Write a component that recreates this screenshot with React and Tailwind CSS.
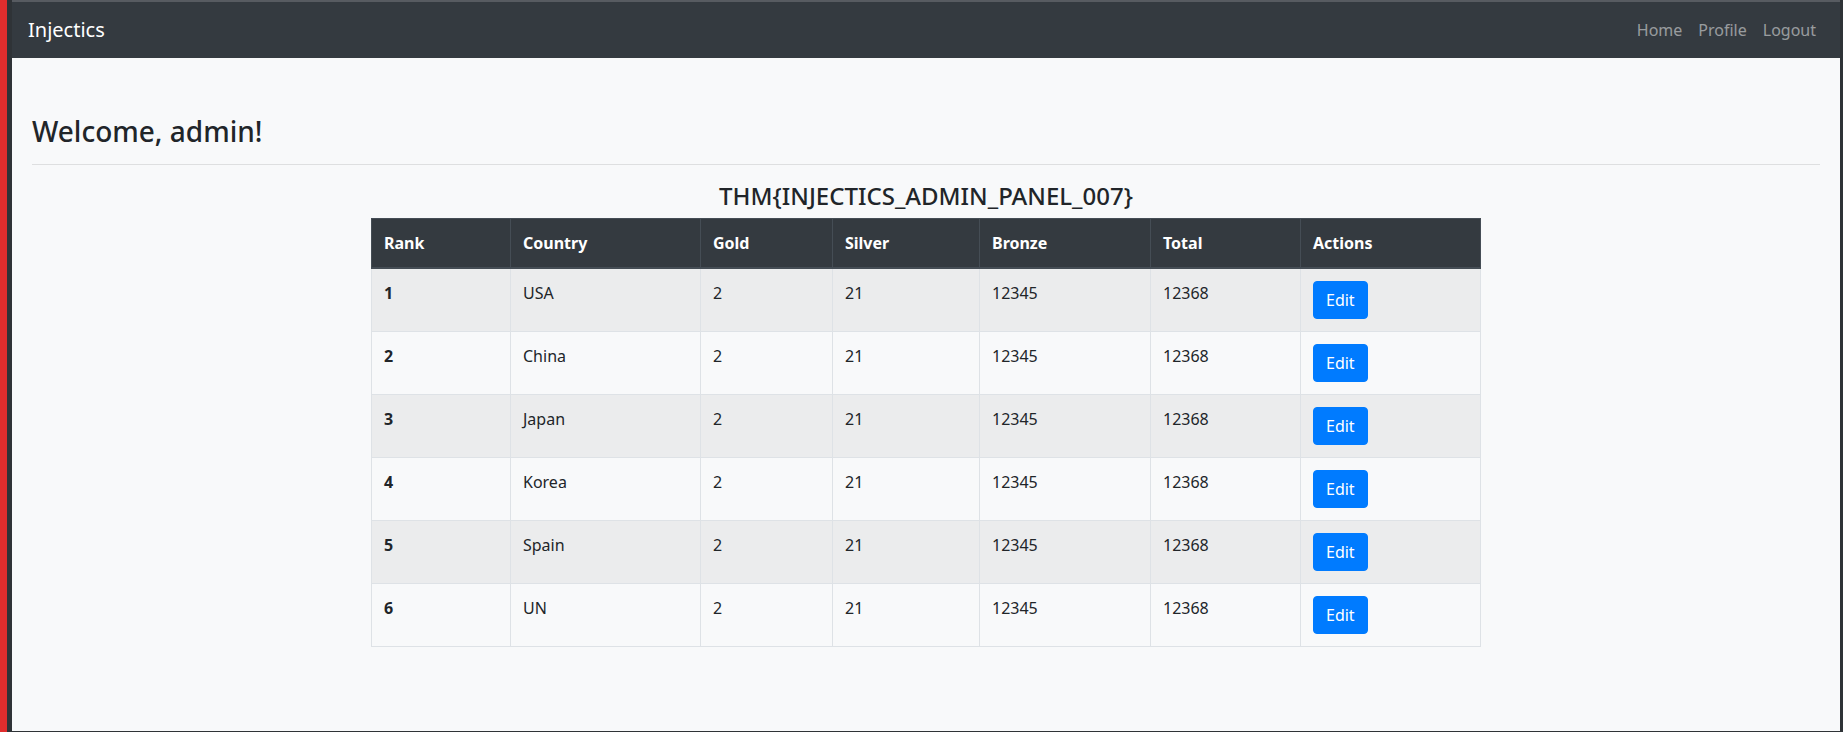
import React from "react";

// medal table rows
const rows = [
  { rank: 1, country: "USA" },
  { rank: 2, country: "China" },
  { rank: 3, country: "Japan" },
  { rank: 4, country: "Korea" },
  { rank: 5, country: "Spain" },
  { rank: 6, country: "UN" },
];

const cols = [
  { label: "Rank", w: "w-[139px]" },
  { label: "Country", w: "w-[190px]" },
  { label: "Gold", w: "w-[132px]" },
  { label: "Silver", w: "w-[147px]" },
  { label: "Bronze", w: "w-[171px]" },
  { label: "Total", w: "w-[150px]" },
  { label: "Actions", w: "w-[180px]" },
];

export default function App() {
  return (
    <div className="flex h-[732px] w-full bg-[#2f3337] font-['Noto_Sans',sans-serif] text-[#212529]">
      <div className="w-[7px] shrink-0 bg-[#e02d2d]" />
      <div className="mb-[1px] ml-[5px] mr-[3px] flex flex-1 flex-col bg-[#f8f9fa]">
        {/* Navbar */}
        <nav className="flex h-[58px] items-center justify-between border-t-2 border-[#575b61] bg-[#343a40] px-4">
          <span className="text-xl leading-[30px] text-white">Injectics</span>
          <ul className="flex text-base leading-6 text-[rgba(255,255,255,0.5)]">
            <li className="px-2">Home</li>
            <li className="px-2">Profile</li>
            <li className="px-2">Logout</li>
          </ul>
        </nav>

        <main className="flex-1 px-5">
          <h3 className="mt-[57px] text-[28px] font-medium leading-[1.2]">Welcome, admin!</h3>
          <hr className="mt-[15px] border-t border-[rgba(0,0,0,0.1)]" />

          <div className="mx-auto w-[1110px]">
            <h4 className="mb-2 mt-[17px] text-center text-2xl font-medium leading-[1.2]">
              THM{"{"}INJECTICS_ADMIN_PANEL_007{"}"}
            </h4>
            <table className="w-full table-fixed border-collapse border border-[#dee2e6] text-left text-base leading-6">
              <thead>
                <tr className="bg-[#343a40] text-white">
                  {cols.map((c) => (
                    <th
                      key={c.label}
                      className={`${c.w} border border-b-2 border-[#454d55] p-3 align-bottom font-bold`}
                    >
                      {c.label}
                    </th>
                  ))}
                </tr>
              </thead>
              <tbody>
                {rows.map((r, i) => (
                  <tr key={r.rank} className={i % 2 === 0 ? "bg-[#ebeced]" : ""}>
                    <th className="border border-[#dee2e6] p-3 align-top font-bold">{r.rank}</th>
                    <td className="border border-[#dee2e6] p-3 align-top">{r.country}</td>
                    <td className="border border-[#dee2e6] p-3 align-top">2</td>
                    <td className="border border-[#dee2e6] p-3 align-top">21</td>
                    <td className="border border-[#dee2e6] p-3 align-top">12345</td>
                    <td className="border border-[#dee2e6] p-3 align-top">12368</td>
                    <td className="border border-[#dee2e6] p-3 align-top">
                      <button className="rounded border border-[#007bff] bg-[#007bff] px-3 py-1.5 text-base leading-6 text-white">
                        Edit
                      </button>
                    </td>
                  </tr>
                ))}
              </tbody>
            </table>
          </div>
        </main>
      </div>
    </div>
  );
}
